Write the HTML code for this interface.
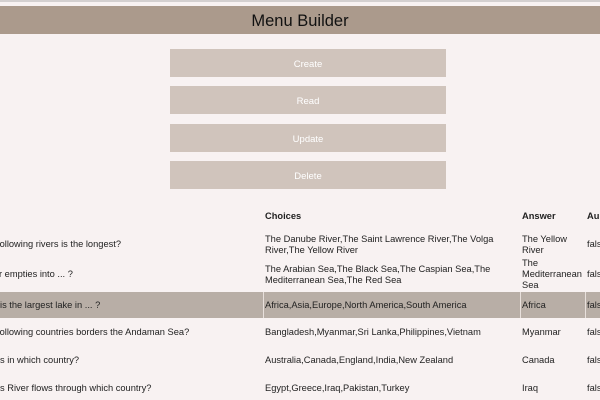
<!DOCTYPE html>
<html><head><style>
body{margin:0;width:600px;height:400px;overflow:hidden;background:#f8f2f2;font-family:"Liberation Sans",Arial,sans-serif;position:relative;color:#222}
.a{position:absolute;white-space:nowrap;font-size:9.3px;line-height:11px}
.hdr{position:absolute;left:0;top:6px;width:600px;height:28px;background:#ab9a8c;text-align:center;font-size:16.5px;line-height:31px;color:#111}
.btn{position:absolute;left:170px;width:276px;height:28px;background:#d0c4bc;color:#fff;text-align:center;font-size:9.5px;line-height:31px}
.hl{position:absolute;left:0;top:292px;width:600px;height:26px;background:#b8aea6}
.vl{position:absolute;top:292px;height:26px;width:1px;background:#e8e0dc}
</style></head><body>
<div style="position:absolute;left:0;top:0;width:600px;height:2px;background:#d4d0d0"></div>
<div class="hdr">Menu Builder</div>
<div class="btn" style="top:49px">Create</div>
<div class="btn" style="top:86px">Read</div>
<div class="btn" style="top:124px">Update</div>
<div class="btn" style="top:161px">Delete</div>
<div class="hl"></div>
<div class="vl" style="left:263px"></div>
<div class="vl" style="left:520px"></div>
<div class="vl" style="left:585px"></div>
<div class="a" style="left:265px;top:211px;font-weight:bold">Choices</div>
<div class="a" style="left:522px;top:211px;font-weight:bold">Answer</div>
<div class="a" style="left:587px;top:211px;font-weight:bold">Au</div>

<div class="a" style="left:-3px;top:239px">following rivers is the longest?</div>
<div class="a" style="left:265px;top:234px">The Danube River,The Saint Lawrence River,The Volga<br>River,The Yellow River</div>
<div class="a" style="left:522px;top:234px">The Yellow<br>River</div>
<div class="a" style="left:587px;top:239px">false</div>

<div class="a" style="left:-1px;top:269px">r empties into ... ?</div>
<div class="a" style="left:265px;top:264px">The Arabian Sea,The Black Sea,The Caspian Sea,The<br>Mediterranean Sea,The Red Sea</div>
<div class="a" style="left:522px;top:258px">The<br>Mediterranean<br>Sea</div>
<div class="a" style="left:587px;top:269px">false</div>

<div class="a" style="left:0px;top:300px">is the largest lake in ... ?</div>
<div class="a" style="left:265px;top:300px">Africa,Asia,Europe,North America,South America</div>
<div class="a" style="left:522px;top:300px">Africa</div>
<div class="a" style="left:587px;top:300px">false</div>

<div class="a" style="left:-3px;top:327px">following countries borders the Andaman Sea?</div>
<div class="a" style="left:265px;top:327px">Bangladesh,Myanmar,Sri Lanka,Philippines,Vietnam</div>
<div class="a" style="left:522px;top:327px">Myanmar</div>
<div class="a" style="left:587px;top:327px">false</div>

<div class="a" style="left:0px;top:355px">s in which country?</div>
<div class="a" style="left:265px;top:355px">Australia,Canada,England,India,New Zealand</div>
<div class="a" style="left:522px;top:355px">Canada</div>
<div class="a" style="left:587px;top:355px">false</div>

<div class="a" style="left:0px;top:383px">s River flows through which country?</div>
<div class="a" style="left:265px;top:383px">Egypt,Greece,Iraq,Pakistan,Turkey</div>
<div class="a" style="left:522px;top:383px">Iraq</div>
<div class="a" style="left:587px;top:383px">false</div>
</body></html>
